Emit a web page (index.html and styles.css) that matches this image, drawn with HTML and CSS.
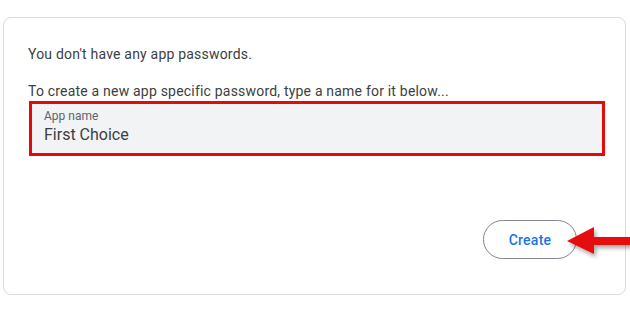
FILE: index.html
```html
<!DOCTYPE html>
<html>
<head>
<meta charset="utf-8">
<link rel="stylesheet" href="styles.css">
</head>
<body>
<div class="page">
  <div class="card">
    <p class="msg first">You don't have any app passwords.</p>
    <p class="msg">To create a new app specific password, type a name for it below...</p>
    <div class="field">
      <div class="label">App name</div>
      <div class="value">First Choice</div>
    </div>
    <div class="actions">
      <button class="create">Create</button>
    </div>
  </div>
  <svg class="arrow" width="66" height="34" viewBox="0 0 66 34">
    <defs>
      <filter id="sh" x="-20%" y="-30%" width="150%" height="180%">
        <feDropShadow dx="2" dy="3" stdDeviation="2" flood-color="#000" flood-opacity="0.35"/>
      </filter>
    </defs>
    <polygon points="1,15 28,1 28,11 66,11 66,19 28,19 28,28" fill="#e50a0a" filter="url(#sh)"/>
  </svg>
</div>
</body>
</html>
```
FILE: styles.css
```css
html, body {
  margin: 0;
  padding: 0;
  background: #ffffff;
}
.page {
  position: relative;
  width: 630px;
  height: 326px;
  padding: 17px 4px 0 3px;
  box-sizing: border-box;
  font-family: Roboto, "Liberation Sans", sans-serif;
}
.card {
  border: 1px solid #dadce0;
  border-radius: 8px;
  height: 278px;
  box-sizing: border-box;
  padding: 26px 20px 0 24px;
  display: flex;
  flex-direction: column;
}
.msg {
  margin: 0;
  font-size: 14px;
  line-height: 20px;
  letter-spacing: 0.2px;
  color: #3c4043;
}
.msg.first {
  margin-bottom: 17px;
}
.field {
  margin-left: 1px;
  border: 3px solid #e50a0a;
  background: #f1f3f4;
  height: 55px;
  box-sizing: border-box;
  padding: 4px 12px 0 12px;
}
.label {
  font-size: 12px;
  line-height: 16px;
  color: #5f6368;
}
.value {
  font-size: 16px;
  line-height: 22px;
  color: #3c4043;
}
.actions {
  display: flex;
  justify-content: flex-end;
  margin-top: 64px;
  padding-right: 28px;
}
.create {
  width: 94px;
  height: 39px;
  border: 1px solid #80868b;
  border-radius: 20px;
  background: #fff;
  color: #1a73e8;
  font-family: Roboto, "Liberation Sans", sans-serif;
  font-size: 14px;
  font-weight: 500;
  letter-spacing: 0.25px;
  padding: 0;
}
.arrow {
  position: absolute;
  left: 566px;
  top: 226px;
}
```
